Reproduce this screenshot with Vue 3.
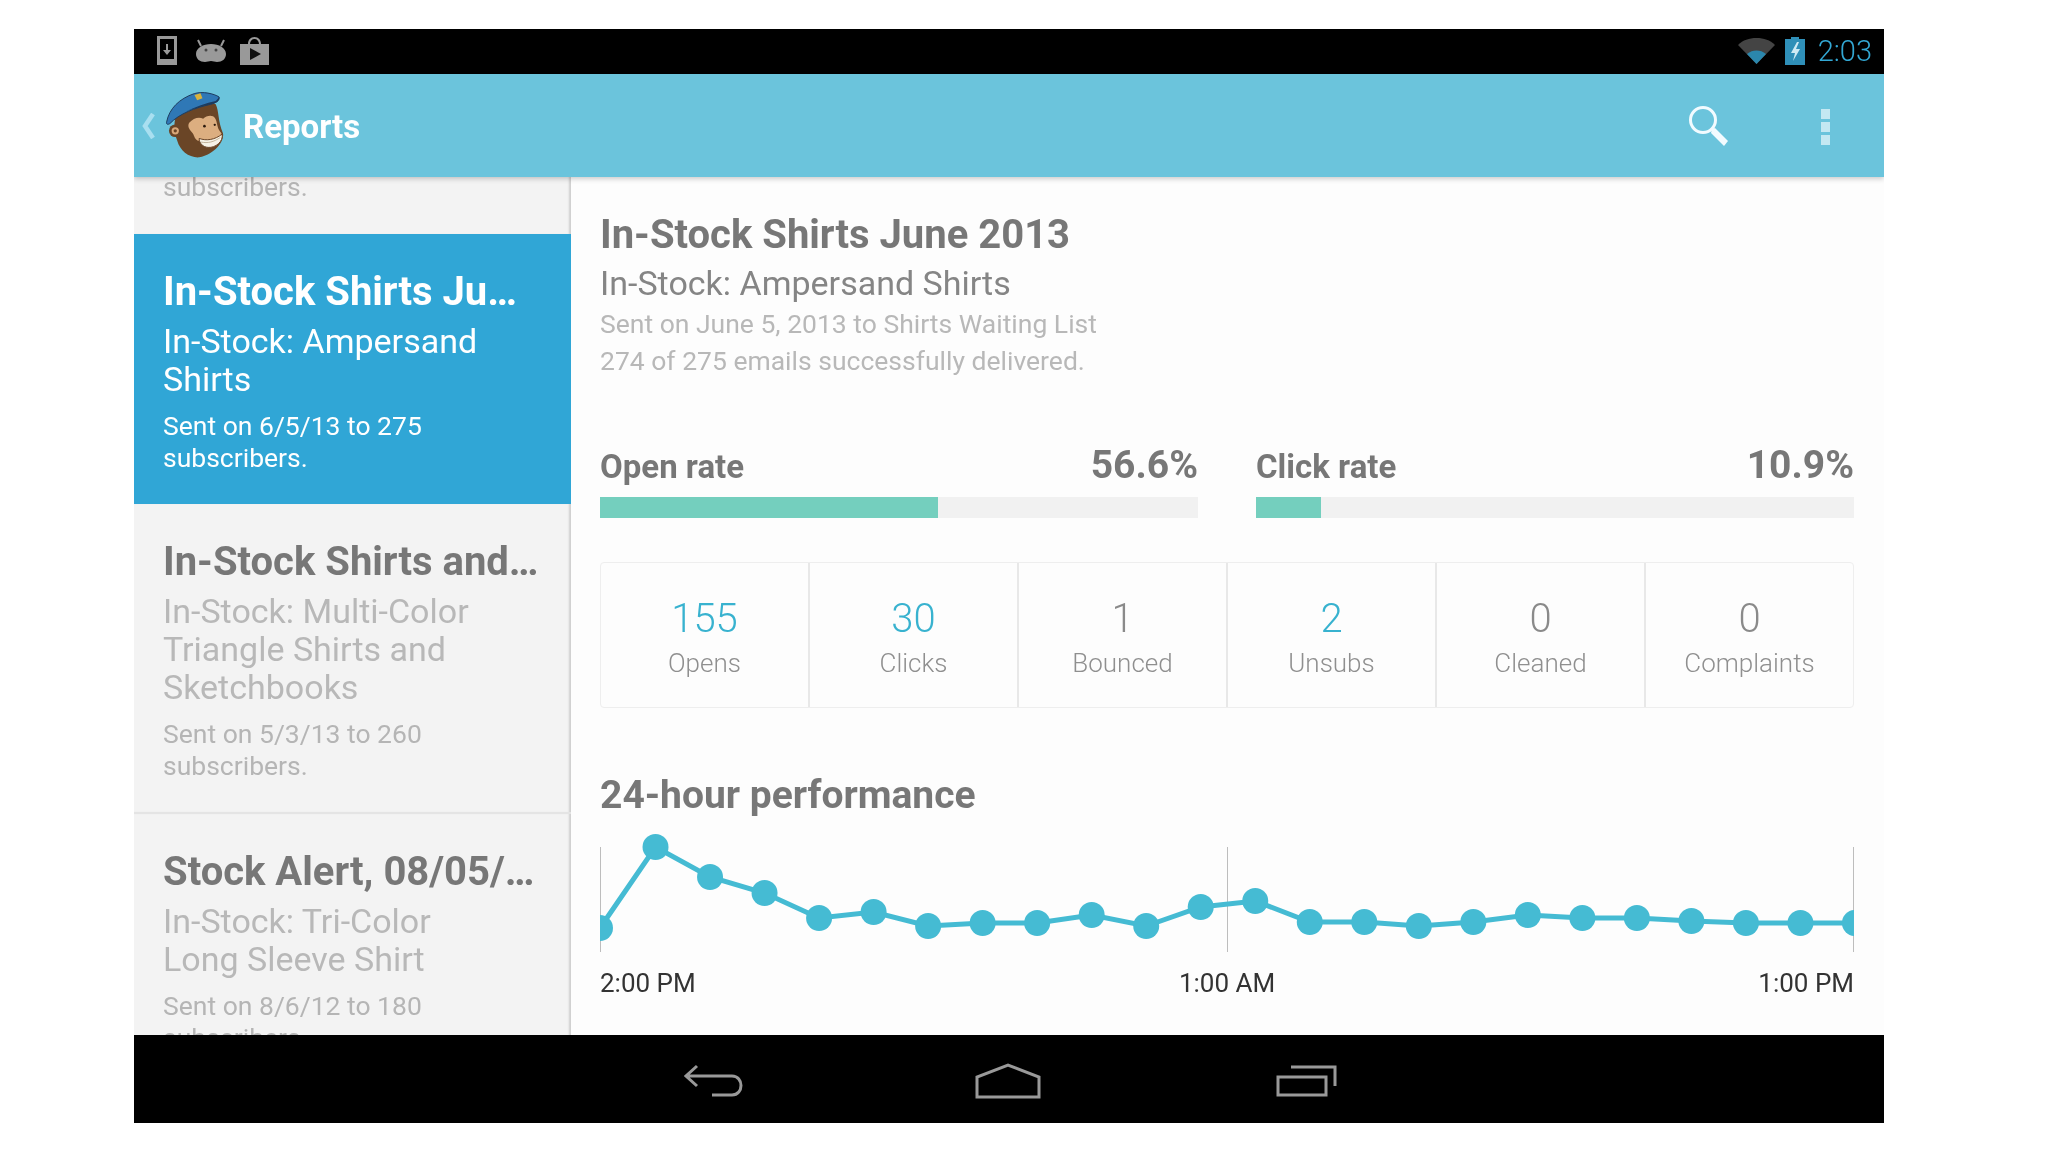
<script setup>
const stats = [
  { n: '155', l: 'Opens', on: true },
  { n: '30', l: 'Clicks', on: true },
  { n: '1', l: 'Bounced' },
  { n: '2', l: 'Unsubs', on: true },
  { n: '0', l: 'Cleaned' },
  { n: '0', l: 'Complaints' },
]
const ys = [928,847,877,893,918,912,926,923,923,915,926,907,901,922,922,926,922,915,918,918,921,923,923,923]
const pts = ys.map((y, i) => ({ x: i === 0 ? 0 : i * 54.52 + 1, y: y - 820 }))
const line = pts.map(p => `${p.x},${p.y}`).join(' ')
const rates = [
  { l: 'Open rate', v: '56.6%', w: '56.6%' },
  { l: 'Click rate', v: '10.9%', w: '10.9%' },
]
</script>

<template>
  <div class="page">
    <div class="device">
      <div class="status">
        <div class="status-left">
          <svg class="i-tab" width="20" height="29" viewBox="0 0 20 29"><path fill="#999" fill-rule="evenodd" d="M0 0h20v29H0zM3 3v20h14V3z"/><path fill="#999" d="M9 8h2v6h3l-4 5-4-5h3z"/></svg>
          <svg class="i-and" width="32" height="24" viewBox="0 0 32 24"><path d="M6 7L3 1M26 7l3-6" stroke="#999" stroke-width="2"/><path fill="#999" d="M16 5c8 0 15 4 15 10 0 5-4 8-9 8-2 0-4-1-6-1s-4 1-6 1c-5 0-9-3-9-8C1 9 8 5 16 5z"/><circle cx="11" cy="11" r="1.500" fill="#444"/><circle cx="21" cy="11" r="1.500" fill="#444"/></svg>
          <svg class="i-bag" width="29" height="28" viewBox="0 0 29 28"><path fill="#999" fill-rule="evenodd" d="M0 7h8c0-4 2.500-7 6.500-7S21 3 21 7h8v21H0zM10 7h9c0-3-2-5-4.500-5S10 4 10 7z"/><path fill="#111" d="M10 11l11 6-11 6z"/></svg>
        </div>
        <div class="status-right">
          <svg width="37" height="26" viewBox="0 0 37 26"><path fill="#444" d="M0 7C5 2 11 0 18.500 0S32 2 37 7L18.500 26z"/><path fill="#2b87ad" d="M9 16c3-2.500 6-3.500 9.500-3.500S25 13.500 28 16l-9.500 10z"/></svg>
          <svg class="batt" width="20" height="28" viewBox="0 0 20 28"><path fill="#2f8fb8" d="M6 0h8v2h6v26H0V2h6z"/><path fill="#cfeaf4" d="M12 5l-6 11h4l-2 8 7-12h-4l3-7z"/></svg>
          <span class="clock">2:03</span>
        </div>
      </div>

      <header class="appbar">
        <svg class="chev" width="14" height="26" viewBox="0 0 14 26"><path d="M12 1L4 13l8 12" fill="none" stroke="#a9dff0" stroke-width="4.500"/></svg>
        <svg class="logo" width="62" height="68" viewBox="85 25 185 205">
          <circle cx="118" cy="142" r="19" fill="#6a4526"/>
          <path fill="#6a4526" d="M118 105C150 70 215 50 240 62c10 20 6 50 22 88 4 25-25 62-72 72-30 2-58-20-66-50-10-25-10-50-6-67z"/>
          <circle cx="118" cy="142" r="11" fill="#d9a878"/>
          <circle cx="118" cy="142" r="5" fill="#6a4526"/>
          <path fill="#dcae80" d="M160 118c12-14 30-20 42-12 10-10 28-14 36-2 8 12 4 28 18 44 6 10 2 16-8 20l-62 4c-12-8-10-18-18-26-8-8-14-18-8-28z"/>
          <circle cx="206" cy="128" r="4" fill="#2b1a0e"/>
          <circle cx="237" cy="124" r="3.500" fill="#2b1a0e"/>
          <path fill="#f6f2e6" stroke="#6a4526" stroke-width="3" d="M190 165c22 8 48 4 69-13 5 22-20 42-42 40-16-1-27-13-27-27z"/>
          <path fill="none" stroke="#b9a88c" stroke-width="2.500" d="M196 176c20 4 38 0 58-14"/>
          <path fill="#2f78b6" stroke="#1d3b5e" stroke-width="3" d="M92 115c8-40 38-70 83-85 25-8 60 0 75 10 2 12-10 18-25 22-45 10-95 28-123 58-7 5-12 2-10-5z"/>
          <path fill="#1d3b5e" d="M150 84c28-14 62-26 90-32l11-12c2 12-10 18-25 22-28 6-55 14-76 22z"/>
          <path fill="#d9b23c" d="M176 34l18-5 6 15-16 6z"/>
        </svg>
        <h1>Reports</h1>
        <div class="actions">
          <svg width="44" height="44" viewBox="0 0 44 44"><circle cx="15" cy="15" r="12.500" fill="none" stroke="#f2fbff" stroke-width="3"/><path d="M24 24l3-1 13 13-4 5-13-13z" fill="#f2fbff"/></svg>
          <div class="more"><i></i><i></i><i></i></div>
        </div>
      </header>

      <div class="body">
        <aside class="list">
          <div class="clip"><span class="meta">subscribers.</span></div>
          <div class="item sel">
            <div class="t">In-Stock Shirts Ju…</div>
            <div class="s">In-Stock: Ampersand<br>Shirts</div>
            <div class="meta">Sent on 6/5/13 to 275<br>subscribers.</div>
          </div>
          <div class="item">
            <div class="t">In-Stock Shirts and…</div>
            <div class="s">In-Stock: Multi-Color<br>Triangle Shirts and<br>Sketchbooks</div>
            <div class="meta">Sent on 5/3/13 to 260<br>subscribers.</div>
          </div>
          <div class="item">
            <div class="t">Stock Alert, 08/05/…</div>
            <div class="s">In-Stock: Tri-Color<br>Long Sleeve Shirt</div>
            <div class="meta">Sent on 8/6/12 to 180<br>subscribers.</div>
          </div>
        </aside>

        <main class="main">
          <h2>In-Stock Shirts June 2013</h2>
          <div class="sub">In-Stock: Ampersand Shirts</div>
          <div class="desc">Sent on June 5, 2013 to Shirts Waiting List</div>
          <div class="desc">274 of 275 emails successfully delivered.</div>

          <div class="rates">
            <div v-for="r in rates" :key="r.l" class="rate">
              <div class="rate-head"><span class="rl">{{ r.l }}</span><span class="rv">{{ r.v }}</span></div>
              <div class="track"><div class="fill" :style="{ width: r.w }"></div></div>
            </div>
          </div>

          <div class="stats">
            <div v-for="s in stats" :key="s.l" class="stat">
              <div class="n" :class="{ on: s.on }">{{ s.n }}</div>
              <div class="l">{{ s.l }}</div>
            </div>
          </div>

          <h3>24-hour performance</h3>
          <svg class="chart" width="1254" height="140" viewBox="0 0 1254 140">
            <path d="M0.500 27V132M627.500 27V132M1253.500 27V132" stroke="#bdbdbd" stroke-width="1" fill="none"/>
            <polyline :points="line" fill="none" stroke="#45bbd3" stroke-width="5"/>
            <circle v-for="(p, i) in pts" :key="i" :cx="p.x" :cy="p.y" r="13" fill="#45bbd3"/>
          </svg>
          <div class="axis"><span>2:00 PM</span><span>1:00 AM</span><span>1:00 PM</span></div>
        </main>
      </div>

      <footer class="nav">
        <svg class="back" width="60" height="34" viewBox="0 0 60 34"><path d="M13 2L2 12l11 10M2 12h46c12 0 12 19 0 19H28" fill="none" stroke="#999" stroke-width="3"/></svg>
        <svg width="66" height="36" viewBox="0 0 66 36"><path d="M2 34V14L33 2l31 12v20z" fill="none" stroke="#999" stroke-width="3"/></svg>
        <svg class="recent" width="62" height="34" viewBox="0 0 62 34"><path d="M2 13h48v18H2zM15 3h44v19" fill="none" stroke="#999" stroke-width="3"/></svg>
      </footer>
    </div>
  </div>
</template>

<style>
html, body { margin: 0; background: #fff; }
</style>

<style scoped>
.page { width: 2048px; height: 1152px; padding: 29px 0 0 134px; box-sizing: border-box; font-family: Roboto, "Liberation Sans", sans-serif; overflow: hidden; }
.device { width: 1750px; height: 1094px; display: flex; flex-direction: column; overflow: hidden; filter: blur(0.5px); }
.status { height: 45px; flex: none; background: #000; display: flex; justify-content: space-between; align-items: center; padding: 0 12px 0 23px; }
.status-left { display: flex; align-items: center; padding-bottom: 2px; }
.i-and { margin-left: 18px; }
.i-bag { margin-left: 13px; }
.status-right { display: flex; align-items: center; gap: 10px; padding-bottom: 1px; }
.batt { margin-right: 3px; }
.clock { color: #33a8d4; font-size: 29px; font-weight: 300; }
.appbar { height: 103px; flex: none; background: #6bc4dc; display: flex; align-items: center; position: relative; z-index: 2; box-shadow: 0 2px 5px rgba(0,0,0,.2); padding-left: 7px; box-sizing: border-box; }
.chev { margin-right: 9px; }
.logo { margin-right: 17px; }
.appbar h1 { margin: 2px 0 0; font-size: 33px; font-weight: 700; color: #fff; }
.actions { margin-left: auto; display: flex; align-items: center; gap: 89px; padding-right: 54px; padding-top: 2px; }
.more { display: flex; flex-direction: column; gap: 3px; }
.more i { display: block; width: 9px; height: 10px; background: #c4e8f2; }
.body { flex: 1; display: flex; min-height: 0; background: #fdfdfd; }
.list { width: 437px; flex: none; background: #f3f3f3; overflow: hidden; }
.clip { height: 57px; color: #b5b5b5; padding-left: 29px; line-height: 18px; box-shadow: inset -3px 0 2px -1px #cfcfcf; }
.clip .meta { font-size: 26.500px; position: relative; top: -6px; }
.item { padding: 36px 14px 30px 29px; border-bottom: 2px solid #e4e4e4; box-shadow: inset -3px 0 2px -1px #cfcfcf; }
.t { font-size: 40px; font-weight: 700; line-height: 44px; color: #777; white-space: nowrap; }
.s { font-size: 34px; line-height: 38px; color: #b8b8b8; margin-top: 8px; }
.meta { font-size: 26.500px; line-height: 32px; color: #b5b5b5; margin-top: 12px; }
.sel { background: #30a6d6; border: 0; box-shadow: none; }
.sel .t, .sel .s, .sel .meta { color: #fff; }
.main { flex: 1; padding: 38px 30px 0 29px; min-width: 0; }
h2 { margin: 0; font-size: 40px; line-height: 40px; font-weight: 700; color: #777; }
.sub { font-size: 34px; line-height: 38px; color: #858585; margin-top: 9px; margin-bottom: 3px; }
.desc { font-size: 26.500px; line-height: 37px; color: #b8b8b8; }
.rates { display: flex; gap: 58px; margin-top: 60px; }
.rate { flex: 1; }
.rate-head { display: flex; justify-content: space-between; align-items: baseline; height: 52px; line-height: 52px; margin-bottom: 6px; }
.rl { font-size: 33px; font-weight: 700; color: #777; }
.rv { font-size: 39px; font-weight: 700; color: #777; }
.track { height: 21px; background: #f1f1f1; }
.fill { height: 100%; background: #74cfbe; }
.stats { display: flex; height: 146px; margin-top: 44px; border: 1px solid #eee; border-radius: 4px; box-sizing: border-box; }
.stat { flex: 1; text-align: center; border-left: 2px solid #e8e8e8; padding-top: 31px; }
.stat:first-child { border-left: 0; }
.n { font-size: 40px; font-weight: 300; line-height: 50px; color: #8a8a8a; }
.n.on { color: #38b2cf; }
.l { font-size: 26px; font-weight: 300; line-height: 34px; margin-top: 2px; color: #8f8f8f; }
h3 { margin: 65px 0 0; font-size: 39px; line-height: 44px; font-weight: 700; color: #777; }
.chart { display: block; margin-top: 3px; overflow: hidden; }
.axis { display: flex; justify-content: space-between; font-size: 26px; line-height: 32px; color: #333; margin-top: 7px; }
.nav { height: 88px; flex: none; background: #000; display: flex; align-items: center; justify-content: center; gap: 233px; position: relative; z-index: 2; padding-top: 3px; box-sizing: border-box; }
.back { margin-left: 2px; margin-right: -2px; }
.recent { margin-left: 2px; margin-right: -2px; }
</style>
